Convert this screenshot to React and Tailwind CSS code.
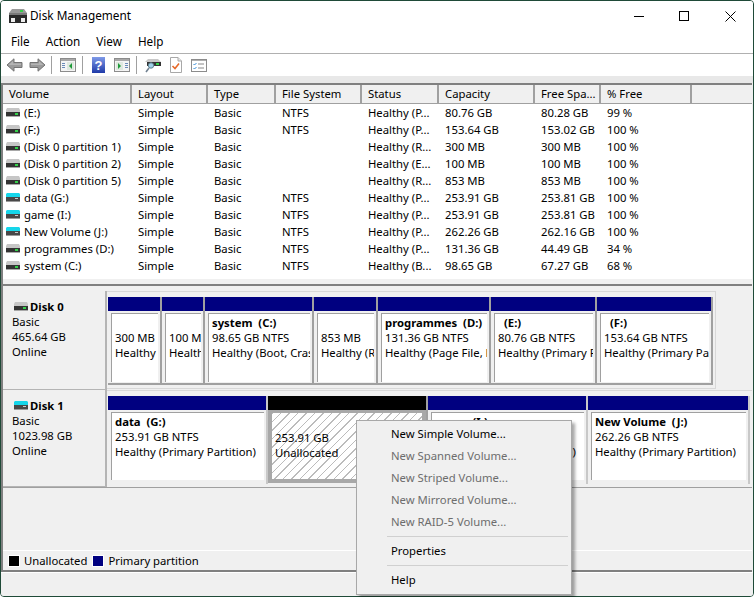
const FONT = "font-['Noto_Sans',sans-serif]";

const COLS = ["w-[129px]", "w-[76px]", "w-[68px]", "w-[86px]", "w-[77px]", "w-[96px]", "w-[66px]", "w-[91px]"];
const HEAD = ["Volume", "Layout", "Type", "File System", "Status", "Capacity", "Free Spa...", "% Free"];
const ROWS = [
  ["gray", "(E:)", "Simple", "Basic", "NTFS", "Healthy (P...", "80.76 GB", "80.28 GB", "99 %"],
  ["gray", "(F:)", "Simple", "Basic", "NTFS", "Healthy (P...", "153.64 GB", "153.02 GB", "100 %"],
  ["gray", "(Disk 0 partition 1)", "Simple", "Basic", "", "Healthy (R...", "300 MB", "300 MB", "100 %"],
  ["gray", "(Disk 0 partition 2)", "Simple", "Basic", "", "Healthy (E...", "100 MB", "100 MB", "100 %"],
  ["gray", "(Disk 0 partition 5)", "Simple", "Basic", "", "Healthy (R...", "853 MB", "853 MB", "100 %"],
  ["cyan", "data (G:)", "Simple", "Basic", "NTFS", "Healthy (P...", "253.91 GB", "253.81 GB", "100 %"],
  ["cyan", "game (I:)", "Simple", "Basic", "NTFS", "Healthy (P...", "253.91 GB", "253.81 GB", "100 %"],
  ["cyan", "New Volume (J:)", "Simple", "Basic", "NTFS", "Healthy (P...", "262.26 GB", "262.16 GB", "100 %"],
  ["gray", "programmes (D:)", "Simple", "Basic", "NTFS", "Healthy (P...", "131.36 GB", "44.49 GB", "34 %"],
  ["gray", "system (C:)", "Simple", "Basic", "NTFS", "Healthy (B...", "98.65 GB", "67.27 GB", "68 %"],
];

function Drive({ kind }) {
  if (kind === "cyan") {
    return (
      <svg width="14" height="9" viewBox="0 0 14 9" className="shrink-0">
        <path d="M1 0h12l1 1v3H0V1z" fill="#16d6ea" />
        <rect x="0" y="4" width="14" height="4" fill="#484848" />
        <rect x="9" y="5" width="3" height="1" fill="#c8c8c8" />
        <rect x="0" y="8" width="14" height="1" fill="#9a9a9a" />
      </svg>
    );
  }
  return (
    <svg width="14" height="9" viewBox="0 0 14 9" className="shrink-0">
      <path d="M1 0h12l1 2v2H0V2z" fill="#c6c6c6" />
      <rect x="0" y="4" width="14" height="4" fill="#333333" />
      <rect x="9" y="5" width="3" height="2" fill="#35d04a" />
      <rect x="0" y="8" width="14" height="1" fill="#a8a8a8" />
    </svg>
  );
}

function Arrow({ flip }) {
  return (
    <svg width="17" height="14" viewBox="0 0 17 14" className={flip ? "" : "-scale-x-100"}>
      <path d="M1 4.500h8V.8L16 7l-7 6.200V9.500H1z" fill="#9a9a9a" stroke="#747474" strokeWidth="1" />
      <path d="M2 5.500h8V3l4.500 4H2z" fill="#b4b4b4" />
    </svg>
  );
}

function Sep() {
  return <div className="w-px h-[18px] bg-[#a0a0a0]" />;
}

function WinIcon({ right }) {
  return (
    <svg width="16" height="14" viewBox="0 0 16 14">
      <rect x="0.5" y="0.5" width="15" height="13" fill="#f4f4f4" stroke="#8c8c8c" />
      <rect x="1" y="1" width="14" height="2" fill="#a8a8a8" />
      {right ? (
        <>
          <rect x="2" y="4" width="7" height="8" fill="#dfe8df" />
          <rect x="11" y="5" width="3" height="1" fill="#6a8ab8" />
          <rect x="11" y="7" width="3" height="1" fill="#6a8ab8" />
          <rect x="11" y="9" width="3" height="1" fill="#6a8ab8" />
          <path d="M4 5l3 3-3 3z" fill="#1f9a3a" />
        </>
      ) : (
        <>
          <rect x="2" y="5" width="3" height="1" fill="#6a8ab8" />
          <rect x="2" y="7" width="3" height="1" fill="#6a8ab8" />
          <rect x="2" y="9" width="3" height="1" fill="#6a8ab8" />
          <rect x="7" y="4" width="7" height="8" fill="#dfe8df" />
          <path d="M12 5l-3 3 3 3z" fill="#1f9a3a" />
        </>
      )}
    </svg>
  );
}

function Toolbar() {
  return (
    <div className="h-[22px] bg-white flex items-center pl-[5px] shrink-0">
      <Arrow />
      <div className="w-[6px]" />
      <Arrow flip />
      <div className="w-[5px]" />
      <Sep />
      <div className="w-[8px]" />
      <WinIcon />
      <div className="w-[6px]" />
      <Sep />
      <div className="w-[9px]" />
      <svg width="13" height="16" viewBox="0 0 13 16">
        <defs>
          <linearGradient id="helpg" x1="0" y1="0" x2="0" y2="1">
            <stop offset="0" stopColor="#7f9ae8" />
            <stop offset="1" stopColor="#1f3aa8" />
          </linearGradient>
        </defs>
        <rect width="13" height="16" fill="url(#helpg)" />
        <text x="6.500" y="13" textAnchor="middle" fontSize="13" fontWeight="700" fill="#fff" fontFamily="Liberation Sans">?</text>
      </svg>
      <div className="w-[9px]" />
      <WinIcon right />
      <div className="w-[6px]" />
      <Sep />
      <div className="w-[8px]" />
      <svg width="16" height="15" viewBox="0 0 16 15">
        <path d="M3 1h10l3 3H0z" fill="#c8c8c8" />
        <rect x="2" y="4" width="14" height="4" fill="#333" />
        <rect x="11" y="5" width="3" height="2" fill="#35d04a" />
        <circle cx="6" cy="7.500" r="2.700" fill="#9fd0e8" stroke="#5f7f8f" />
        <path d="M4 10L1 14" stroke="#6f7f8f" strokeWidth="1.500" />
      </svg>
      <div className="w-[9px]" />
      <svg width="12" height="16" viewBox="0 0 12 16">
        <path d="M.5.5h7.500l3.500 3.500v11.500H.5z" fill="#fff" stroke="#a8a8a8" />
        <path d="M8 .5V4h3.500" fill="#e8e8e8" stroke="#a8a8a8" />
        <path d="M2.500 9l2.500 2.500 4-5" fill="none" stroke="#e86a2a" strokeWidth="1.600" />
      </svg>
      <div className="w-[9px]" />
      <svg width="16" height="13" viewBox="0 0 16 13">
        <rect x="0.500" y="0.500" width="15" height="12" fill="#fff" stroke="#8c8c8c" />
        <rect x="1" y="1" width="14" height="1" fill="#b0b0b0" />
        <path d="M2.500 5l1 1 2-2M2.500 9l1 1 2-2" fill="none" stroke="#3a8fd8" strokeWidth="1" />
        <rect x="7" y="4.500" width="6" height="1" fill="#8a8a8a" />
        <rect x="7" y="8.500" width="6" height="1" fill="#8a8a8a" />
      </svg>
    </div>
  );
}

function Table() {
  return (
    <div className="h-[193px] bg-white flex flex-col shrink-0">
      <div className="h-[19px] flex bg-[#f0f0f0] border-b border-[#a0a0a0] shrink-0">
        {HEAD.map((h, i) => (
          <div key={h} className={`${COLS[i]} pl-[6px] border-r-2 border-[#a0a0a0] leading-[18px] whitespace-nowrap overflow-hidden`}>{h}</div>
        ))}
        <div className="flex-1" />
      </div>
      <div className="flex flex-col">
        {ROWS.map((r) => (
          <div key={r[1]} className="flex h-[17px] leading-[17px] whitespace-nowrap">
            <div className={`${COLS[0]} pl-[3px] flex items-center gap-[4px]`}>
              <Drive kind={r[0]} />
              <span>{r[1]}</span>
            </div>
            {r.slice(2).map((c, i) => (
              <div key={i} className={`${COLS[i + 1]} pl-[6px]`}>{c}</div>
            ))}
          </div>
        ))}
      </div>
    </div>
  );
}

function Label({ icon, name, size }) {
  return (
    <div className="w-[104px] h-full shrink-0 border-r-2 border-b border-[#b4b4b4] pl-[9px] pt-[8px] leading-[15px] bg-[#f0f0f0]">
      <div className="flex items-center gap-[2px] h-[15px] pl-[2px]">
        <Drive kind={icon} />
        <span className="font-bold">{name}</span>
      </div>
      <div>Basic</div>
      <div>{size}</div>
      <div>Online</div>
    </div>
  );
}

function Cell({ w, name, size, status, indentName, flat }) {
  return (
    <div className={`${w} h-full flex flex-col border-r-2 ${flat ? "border-[#c8c8c8]" : "border-b-2 border-[#a0a0a0]"} shrink-0`}>
      <div className="h-[14px] bg-[#000080] shrink-0" />
      <div className={`flex-1 pl-[3px] pr-[2px] min-h-0 ${flat ? "pt-[2px] pb-[4px]" : "pt-[2px] pb-px"}`}>
        <div className="h-full bg-white border-t border-l border-[#a0a0a0] pl-[3px] pt-px leading-[15px] whitespace-pre overflow-hidden">
          <div className={`font-bold h-[15px] ${indentName ? "pl-[6px]" : ""}`}>{name}</div>
          <div>{size}</div>
          <div>{status}</div>
        </div>
      </div>
    </div>
  );
}

function Unalloc() {
  return (
    <div className="w-[160px] h-full flex flex-col border-r-2 border-[#a0a0a0] shrink-0">
      <div className="h-[14px] bg-black shrink-0" />
      <div className="flex-1 pb-px min-h-0">
        <div className="h-full border-[4px] border-t-[3px] border-[#a8a8a8] bg-[repeating-linear-gradient(135deg,#bcbcbc_0,#bcbcbc_1px,#ffffff_1px,#ffffff_6px)] pl-[3px] pt-[2px] leading-[15px] whitespace-nowrap overflow-hidden">
          <div className="h-[15px]" />
          <div>253.91 GB</div>
          <div>Unallocated</div>
        </div>
      </div>
    </div>
  );
}

function Disks() {
  return (
    <div className="flex-1 flex flex-col bg-[#f0f0f0] min-h-0">
      <div className="h-[5px] shrink-0" />
      <div className="h-[99px] flex shrink-0">
        <Label icon="gray" name="Disk 0" size="465.64 GB" />
        <div className="h-[98px] flex pt-[5px] pb-[3px] pl-px pr-[2px] border-t border-r border-b border-[#d8d8d8]">
          <Cell w="w-[54px]" name="" size="300 MB" status="Healthy (Recovery Partition)" />
          <Cell w="w-[43px]" name="" size="100 MB" status="Healthy (EFI System)" />
          <Cell w="w-[109px]" name="system  (C:)" size="98.65 GB NTFS" status="Healthy (Boot, Crash Dump)" />
          <Cell w="w-[64px]" name="" size="853 MB" status="Healthy (Recovery)" />
          <Cell w="w-[113px]" name="programmes  (D:)" size="131.36 GB NTFS" status="Healthy (Page File, Primary)" />
          <Cell w="w-[106px]" name="(E:)" indentName size="80.76 GB NTFS" status="Healthy (Primary Partition)" />
          <Cell w="w-[116px]" name="(F:)" indentName size="153.64 GB NTFS" status="Healthy (Primary Partition)" />
        </div>
      </div>
      <div className="h-[98px] flex shrink-0 border-b border-[#a0a0a0]">
        <Label icon="cyan" name="Disk 1" size="1023.98 GB" />
        <div className="flex-1 flex pt-[5px] pb-[3px] pl-px border-t border-[#d8d8d8]">
          <Cell flat w="w-[160px]" name="data  (G:)" size="253.91 GB NTFS" status="Healthy (Primary Partition)" />
          <Unalloc />
          <Cell flat w="w-[160px]" name="game  (I:)" size="253.91 GB NTFS" status="Healthy (Primary Partition)" />
          <Cell flat w="w-[162px]" name="New Volume  (J:)" size="262.26 GB NTFS" status="Healthy (Primary Partition)" />
        </div>
      </div>
      <div className="flex-1" />
      <div className="h-[20px] border-t border-white flex items-center pl-[5px] pt-px shrink-0">
        <span className="w-[12px] h-[12px] bg-black border border-white shrink-0" />
        <span className="ml-[4px]">Unallocated</span>
        <span className="ml-[5px] w-[12px] h-[12px] bg-[#000080] border border-white shrink-0" />
        <span className="ml-[4px]">Primary partition</span>
      </div>
    </div>
  );
}

function Menu() {
  const Item = ({ children, off }) => (
    <div className={`h-[22px] leading-[22px] pl-[34px] whitespace-nowrap ${off ? "text-[#6d6d6d]" : "text-black"}`}>{children}</div>
  );
  const Line = () => <div className="h-px bg-[#d0d0d0] ml-[30px] mr-[3px] my-[3px]" />;
  return (
    <div className="absolute left-[356px] top-[420px] w-[216px] h-[175px] bg-[#f0f0f0] border border-[#a8a8a8] shadow-[3px_3px_3px_rgba(0,0,0,0.35)] pt-[2px]">
      <Item>New Simple Volume...</Item>
      <Item off>New Spanned Volume...</Item>
      <Item off>New Striped Volume...</Item>
      <Item off>New Mirrored Volume...</Item>
      <Item off>New RAID-5 Volume...</Item>
      <Line />
      <Item>Properties</Item>
      <Line />
      <Item>Help</Item>
    </div>
  );
}

export default function App() {
  return (
    <div className="relative w-[754px] h-[597px] overflow-hidden bg-white">
      <div className={`${FONT} text-[11.3px] text-black w-full h-full flex flex-col bg-[#f0f0f0] border border-[#1f4a38] rounded-[4px] overflow-hidden`}>
        <div className="h-[30px] bg-white flex items-center shrink-0">
          <svg width="18" height="14" viewBox="0 0 18 14" className="ml-[8px] mr-[3px]">
            <path d="M3 0h12l3 4H0z" fill="#9a9a9a" />
            <rect x="0" y="4" width="18" height="3" fill="#7a7a7a" />
            <rect x="11" y="1" width="3" height="2" fill="#35d04a" />
            <rect x="0" y="6" width="18" height="8" fill="#2a2a2a" />
            <rect x="2" y="9" width="4" height="4" fill="#ececec" />
            <rect x="12" y="9" width="4" height="4" fill="#ececec" />
          </svg>
          <span className="text-[11.8px]">Disk Management</span>
          <div className="ml-auto flex items-center h-full">
            <div className="w-[45px] flex justify-center"><div className="w-[10px] h-px bg-black" /></div>
            <div className="w-[46px] flex justify-center"><div className="w-[10px] h-[10px] border border-black" /></div>
            <div className="w-[46px] flex justify-center">
              <svg width="11" height="11" viewBox="0 0 11 11"><path d="M.5.5l10 10M10.500.5l-10 10" stroke="#000" strokeWidth="1" /></svg>
            </div>
          </div>
        </div>
        <div className="h-[22px] bg-white flex items-center pl-[10px] gap-[16px] shrink-0 text-[11.7px]">
          <span>File</span><span>Action</span><span>View</span><span>Help</span>
        </div>
        <div className="h-px bg-[#b0b0b0] shrink-0" />
        <Toolbar />
        <div className="h-[7px] bg-[#e8e8e8] shrink-0" />
        <div className="flex-1 flex flex-col mr-px border-l-2 border-t-2 border-b-2 border-[#808080] min-h-0 bg-[#f0f0f0]">
          <Table />
          <div className="h-[6px] bg-[#f0f0f0] border-t border-white shrink-0" />
          <div className="h-[2px] bg-[#808080] shrink-0" />
          <Disks />
        </div>
        <div className="h-[24px] bg-[#f0f0f0] border-t border-white shrink-0" />
      </div>
      <div className={`${FONT} text-[11.3px]`}>
        <Menu />
      </div>
    </div>
  );
}
